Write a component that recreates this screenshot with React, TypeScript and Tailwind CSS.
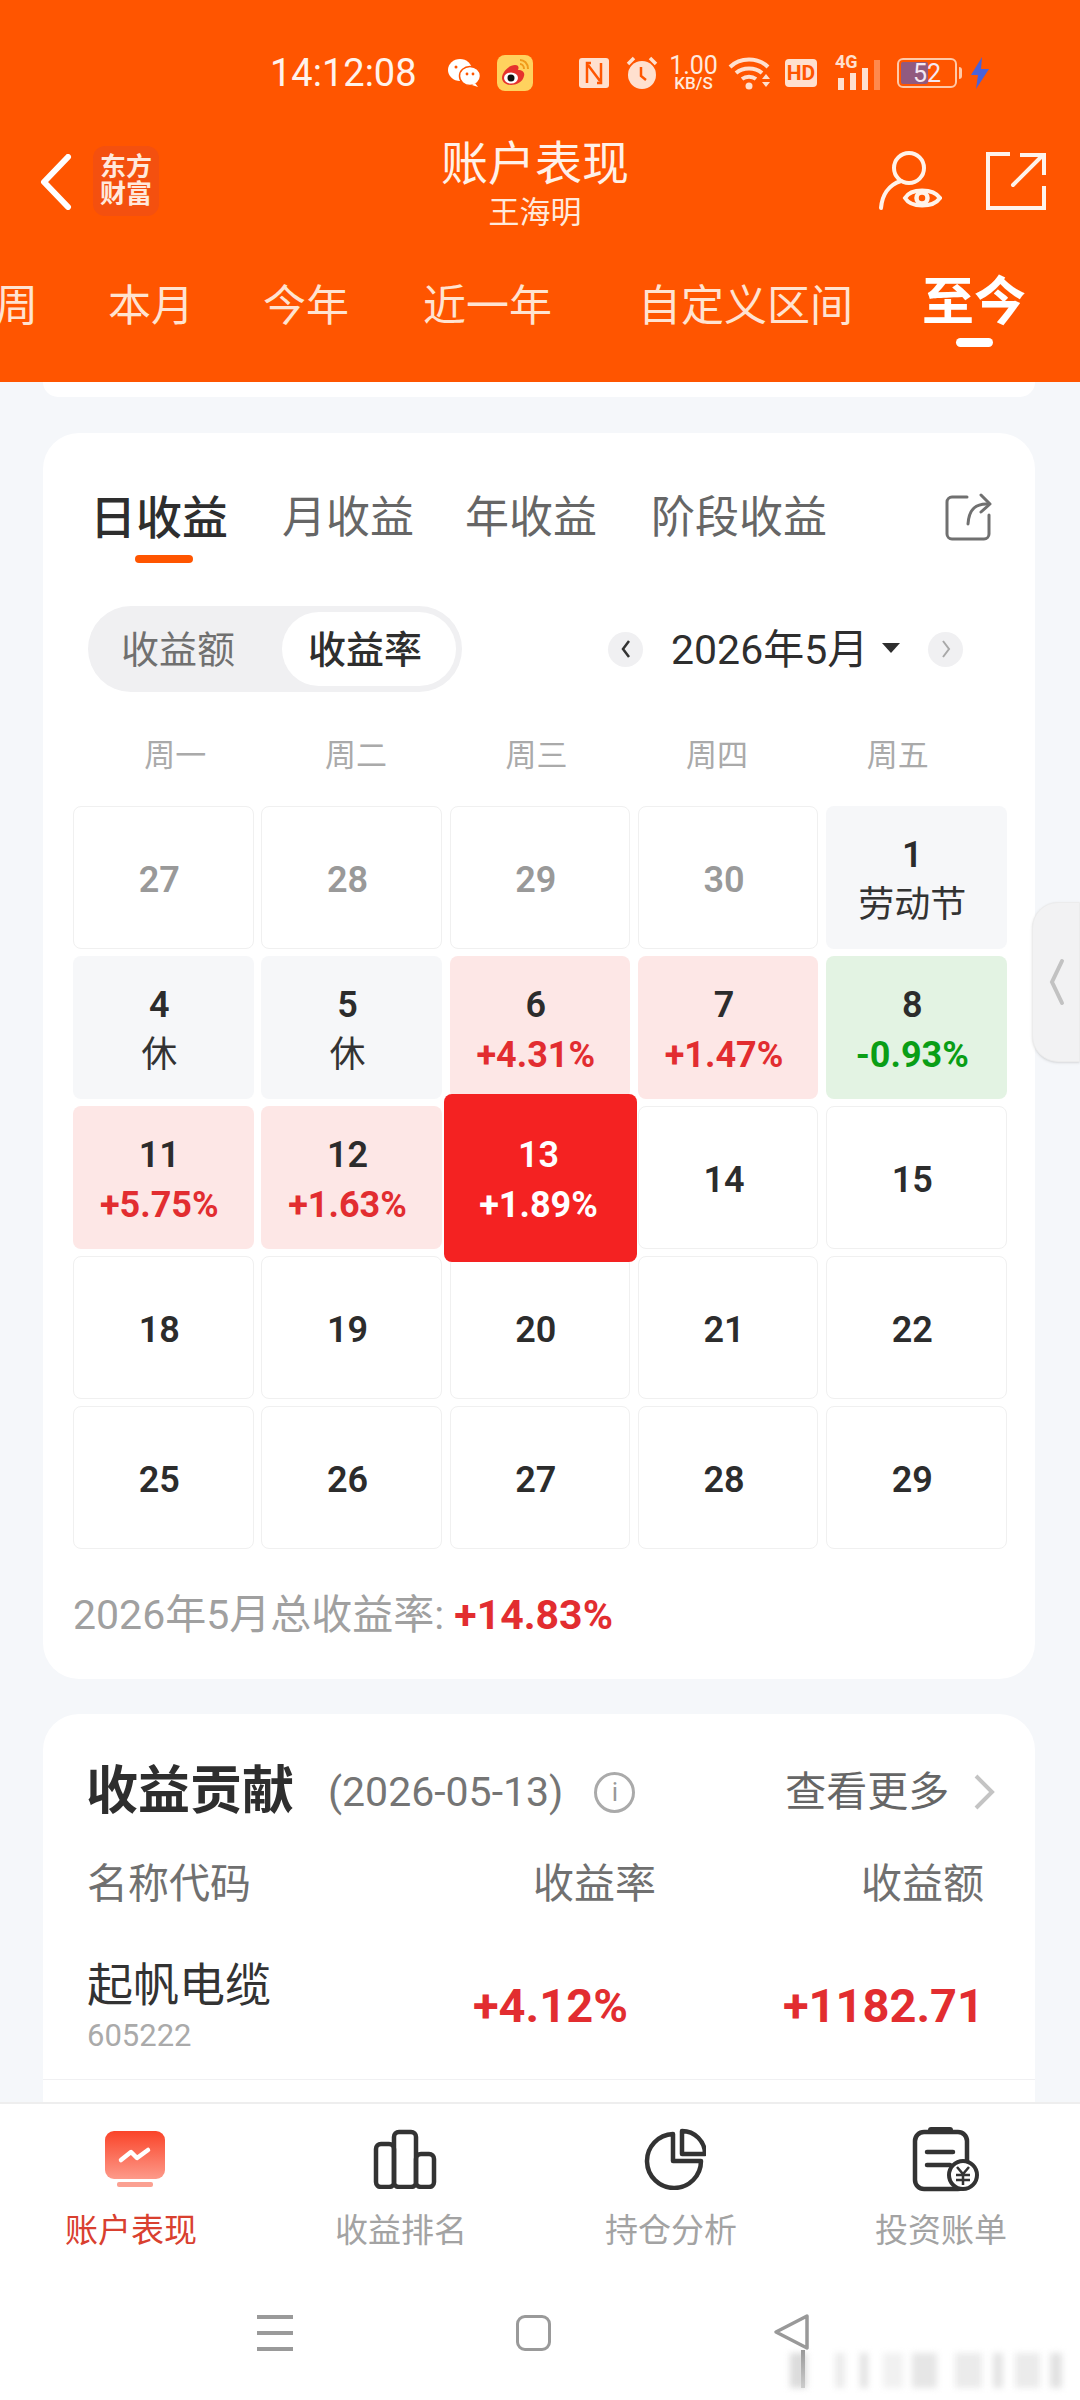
const font = { fontFamily: '"Roboto", "Noto Sans CJK SC", sans-serif' };

const StatusBar = () => (
  <div className="flex h-[132px] items-center pl-[270px] pt-[14px]">
    <span className="w-[177px] text-[38px] leading-none text-[#fff3ec]">14:12:08</span>
    <svg width="34" height="30" viewBox="0 0 34 30" className="mr-[16px]">
      <ellipse cx="13" cy="12" rx="12" ry="11" fill="#fff" />
      <ellipse cx="23" cy="18" rx="10.5" ry="9.5" fill="#fff" stroke="#ff5500" strokeWidth="1.5" />
      <path d="M28 25l3 4-6-2z" fill="#fff" />
      <circle cx="9" cy="9" r="1.5" fill="#ff5500" />
      <circle cx="20" cy="16" r="1.4" fill="#ff5500" />
      <circle cx="26" cy="16" r="1.4" fill="#ff5500" />
    </svg>
    <svg width="36" height="36" viewBox="0 0 36 36" className="mr-[46px]">
      <rect width="36" height="36" rx="8" fill="#ffd25e" />
      <path d="M5 23c0-6 7-13 13-13 4 0 4 3 3 5 5 0 7 3 6 6-1 6-8 9-13 9-5 0-9-3-9-7z" fill="#e6322d" />
      <ellipse cx="14" cy="23" rx="7" ry="5.5" fill="#fff" />
      <circle cx="14" cy="23" r="3.5" fill="#111" />
      <path d="M23 5c4 0 8 3 8 9M23 9c2 0 4 2 4 5" fill="none" stroke="#f09a1a" strokeWidth="2" />
    </svg>
    <svg width="30" height="30" viewBox="0 0 30 30" className="mr-[17px]">
      <rect width="30" height="30" rx="3" fill="#ffe0cf" />
      <path d="M12 5H8v20M18 25h4V5M9 7l12 16" fill="none" stroke="#ff5500" strokeWidth="2.5" />
    </svg>
    <svg width="32" height="34" viewBox="0 0 32 34" className="mr-[12px]">
      <circle cx="16" cy="19" r="14" fill="#ffe0cf" />
      <path d="M15 11v9l5 4" fill="none" stroke="#ff5500" strokeWidth="2.5" />
      <path d="M2 8l6-6M30 8l-6-6" stroke="#ffe0cf" strokeWidth="3.5" />
    </svg>
    <div className="mr-[11px] flex w-[47px] flex-col items-center text-[#ffe9dd]">
      <span className="text-[25px] leading-[20px]">1.00</span>
      <span className="text-[17px] leading-[15px] font-medium">KB/S</span>
    </div>
    <svg width="45" height="34" viewBox="0 0 45 34" className="mr-[12px]">
      <path d="M2 11c10-10 28-10 38 0M8 17c7-6 19-6 26 0M14 23c4-3 10-3 14 0" fill="none" stroke="#ffe0cf" strokeWidth="4" />
      <circle cx="21" cy="30" r="3.5" fill="#ffe0cf" />
      <path d="M34 23l4-5 4 5zM34 26l4 5 4-5z" fill="#ffe0cf" />
    </svg>
    <div className="mr-[18px] flex h-[28px] w-[32px] items-center justify-center rounded-[4px] bg-[#ffe0cf] text-[21px] leading-none font-bold text-[#ff5500]">
      HD
    </div>
    <div className="relative mr-[17px] h-[34px] w-[45px]">
      <span className="absolute -top-[3px] left-0 text-[18px] leading-none font-bold text-[#ffe0cf]">4G</span>
      <div className="absolute bottom-0 left-[3px] flex items-end gap-[6px]">
        <div className="h-[12px] w-[6px] bg-[#ffe0cf]" />
        <div className="h-[17px] w-[6px] bg-[#ffe0cf]" />
        <div className="h-[22px] w-[6px] bg-[#ffe0cf]" />
        <div className="h-[30px] w-[6px] bg-[#ff8a4d]" />
      </div>
    </div>
    <div className="relative mr-[13px] flex h-[30px] w-[60px] items-center rounded-[6px] border-2 border-[#ffc9a8] p-[2px]">
      <div className="h-full w-[52%] rounded-[2px] bg-[#915a7f]" />
      <span className="absolute inset-0 flex items-center justify-center text-[25px] leading-none text-[#f4e8f2]">52</span>
      <div className="absolute top-[7px] -right-[7px] h-[12px] w-[3px] rounded-r bg-[#ffc9a8]" />
    </div>
    <svg width="20" height="32" viewBox="0 0 20 32">
      <path d="M12 0L1 18h7l-2 14L19 12h-8z" fill="#4a62d8" />
    </svg>
  </div>
);

const NavBar = () => (
  <div className="relative flex h-[106px] items-start">
    <svg width="34" height="56" viewBox="0 0 34 56" className="mt-[22px] ml-[39px]">
      <path d="M29 3L5 28l24 25" fill="none" stroke="#fff" strokeWidth="6" strokeLinecap="round" strokeLinejoin="round" />
    </svg>
    <div className="mt-[14px] ml-[20px] flex h-[70px] w-[66px] flex-col items-center justify-center rounded-[12px] bg-[#f4500f] text-[26px] leading-[27px] font-bold text-[#ffe9dc]">
      <span>东方</span>
      <span>财富</span>
    </div>
    <div className="absolute top-0 left-0 flex w-full flex-col items-center pr-[10px]">
      <span className="mt-[5px] text-[47px] leading-[54px] text-[#fff1e8]">账户表现</span>
      <span className="text-[31px] leading-[44px] text-[#ffe9dc]">王海明</span>
    </div>
    <svg width="64" height="64" viewBox="0 0 64 64" className="mt-[18px] ml-[719px]" fill="none" stroke="#fff3ea" strokeWidth="4" strokeLinecap="round">
      <circle cx="31" cy="18" r="15" />
      <path d="M23 31C10 35 4 46 3 58" />
      <path d="M27 48c6-10 28-10 35 0-7 10-29 10-35 0z" strokeWidth="4" />
      <circle cx="44" cy="48" r="5.5" strokeWidth="4.5" />
    </svg>
    <svg width="60" height="60" viewBox="0 0 60 60" className="mt-[20px] ml-[44px]" fill="none" stroke="#fff3ea" strokeWidth="4">
      <path d="M24 2H2v54h56V34" />
      <path d="M34 3h24v20" />
      <path d="M57 3L27 33" strokeLinecap="round" />
    </svg>
  </div>
);

const PeriodTabs = () => (
  <div className="flex h-[144px] items-start overflow-hidden text-[43px] leading-[56px] text-[#ffe3d1]">
    <div className="mt-[40px] -ml-[5px] flex">
      <span className="w-[43px]">周</span>
      <span className="ml-[70px]">本月</span>
      <span className="ml-[69px]">今年</span>
      <span className="ml-[74px]">近一年</span>
      <span className="ml-[86px]">自定义区间</span>
    </div>
    <div className="mt-[31px] ml-[69px] flex flex-col items-center">
      <span className="text-[52px] leading-[68px] font-semibold text-white">至今</span>
      <div className="mt-[1px] h-[9px] w-[37px] rounded-full bg-white" />
    </div>
  </div>
);

type Cell = {
  day: number;
  sub?: string;
  kind?: "muted" | "plain" | "off" | "up" | "down" | "today";
};

const cells: Cell[] = [
  { day: 27, kind: "muted" },
  { day: 28, kind: "muted" },
  { day: 29, kind: "muted" },
  { day: 30, kind: "muted" },
  { day: 1, sub: "劳动节", kind: "off" },
  { day: 4, sub: "休", kind: "off" },
  { day: 5, sub: "休", kind: "off" },
  { day: 6, sub: "+4.31%", kind: "up" },
  { day: 7, sub: "+1.47%", kind: "up" },
  { day: 8, sub: "-0.93%", kind: "down" },
  { day: 11, sub: "+5.75%", kind: "up" },
  { day: 12, sub: "+1.63%", kind: "up" },
  { day: 13, sub: "+1.89%", kind: "today" },
  { day: 14 },
  { day: 15 },
  { day: 18 },
  { day: 19 },
  { day: 20 },
  { day: 21 },
  { day: 22 },
  { day: 25 },
  { day: 26 },
  { day: 27 },
  { day: 28 },
  { day: 29 },
];

const cellStyle = {
  muted: "border border-[#f0f0f0] bg-white",
  plain: "border border-[#f0f0f0] bg-white",
  off: "bg-[#f6f7f9]",
  up: "bg-[#fde7e6]",
  down: "bg-[#e3f3e3]",
  today: "",
};

const subStyle = {
  muted: "",
  plain: "",
  off: "text-[36px] font-normal text-[#333333]",
  up: "text-[36px] font-bold text-[#e22d30]",
  down: "text-[36px] font-bold text-[#0a9e16]",
  today: "",
};

const DayCell = ({ day, sub, kind = "plain" }: Cell) => {
  if (kind === "today") {
    return (
      <div className="relative">
        <div className="absolute -top-[12px] -left-[6px] z-10 flex h-[168px] w-[193px] flex-col items-center justify-center rounded-[8px] bg-[#f42222] pt-[3px] pr-[3px] text-white">
          <span className="text-[36px] leading-[50px] font-semibold">{day}</span>
          <span className="text-[36px] leading-[50px] font-bold">{sub}</span>
        </div>
      </div>
    );
  }
  return (
    <div className={`flex flex-col items-center justify-center rounded-[8px] pt-[5px] pr-[8px] ${cellStyle[kind]}`}>
      <span className={`text-[36px] leading-[50px] font-semibold ${kind === "muted" ? "text-[#999999]" : "text-[#2c2c2c]"}`}>
        {day}
      </span>
      {sub && <span className={`leading-[50px] ${subStyle[kind]}`}>{sub}</span>}
    </div>
  );
};

const CalendarCard = () => (
  <div className="mx-[43px] mt-[36px] h-[1246px] w-[992px] shrink-0 rounded-[36px] bg-white">
    <div className="relative flex h-[130px] items-start pt-[53px] pl-[47px] text-[44px] leading-[64px] text-[#666666]">
      <span className="text-[46px] font-medium text-[#2e2e2e]">日收益</span>
      <span className="ml-[54px]">月收益</span>
      <span className="ml-[51px]">年收益</span>
      <span className="ml-[54px]">阶段收益</span>
      <div className="absolute top-[122px] left-[92px] h-[8px] w-[58px] rounded-full bg-[#ff5500]" />
      <svg width="48" height="48" viewBox="0 0 48 48" className="absolute top-[60px] left-[902px]" fill="none" stroke="#707070" strokeWidth="3" strokeLinecap="round" strokeLinejoin="round">
        <path d="M22 4H7a5 5 0 0 0-5 5v32a5 5 0 0 0 5 5h32a5 5 0 0 0 5-5V22" />
        <path d="M36 2l9 9-9 8" />
        <path d="M44 11c-13-1-20 5-21 20" />
      </svg>
    </div>
    <div className="mt-[43px] flex h-[86px] items-center pl-[45px]">
      <div className="flex h-[86px] w-[374px] items-center rounded-full bg-[#f0f0f2] pl-[33px] text-[38px]">
        <span className="pt-[2px] text-[#707070]">收益额</span>
        <div className="ml-[47px] flex h-[74px] w-[174px] items-center justify-center rounded-full bg-white pt-[2px] pr-[8px] font-medium text-[#2e2e2e]">
          收益率
        </div>
      </div>
      <div className="ml-[146px] flex h-[35px] w-[35px] items-center justify-center rounded-full bg-[#f0f0f2]">
        <svg width="10" height="20" viewBox="0 0 10 20" fill="none" stroke="#333" strokeWidth="2.5"><path d="M8 2L2 10l6 8" /></svg>
      </div>
      <span className="ml-[28px] pt-[2px] text-[41px] leading-none text-[#2e2e2e]">2026年5月</span>
      <div className="mt-[-2px] ml-[14px] h-0 w-0 border-x-[9px] border-t-[10px] border-x-transparent border-t-[#2e2e2e]" />
      <div className="ml-[28px] flex h-[35px] w-[35px] items-center justify-center rounded-full bg-[#f0f0f2]">
        <svg width="10" height="20" viewBox="0 0 10 20" fill="none" stroke="#a8a8a8" strokeWidth="2"><path d="M2 2l6 8-6 8" /></svg>
      </div>
    </div>
    <div className="mt-[42px] ml-[42px] grid w-[903px] grid-cols-5 text-center text-[31px] leading-[44px] text-[#aaaaaa]">
      <span>周一</span>
      <span>周二</span>
      <span>周三</span>
      <span>周四</span>
      <span>周五</span>
    </div>
    <div className="mt-[28px] ml-[30px] grid w-[933.5px] grid-cols-5 grid-rows-[repeat(5,143px)] gap-x-[7.75px] gap-y-[7px]">
      {cells.map((cell, i) => (
        <DayCell key={i} {...cell} />
      ))}
    </div>
    <div className="mt-[42px] ml-[30px] text-[41px] leading-[48px] text-[#a0a0a0]">
      2026年5月总收益率: <span className="font-bold text-[#e22d30]">+14.83%</span>
    </div>
  </div>
);

const ContributionCard = () => (
  <div className="mx-[43px] mt-[35px] w-[992px] shrink-0 rounded-t-[36px] bg-white">
    <div className="flex h-[150px] items-center pt-[6px] pl-[43px]">
      <span className="text-[52px] leading-none font-bold text-[#2e2e2e]">收益贡献</span>
      <span className="ml-[34px] text-[41px] leading-none text-[#757575]">(2026-05-13)</span>
      <div className="ml-[31px] flex h-[41px] w-[41px] items-center justify-center rounded-full border-[3px] border-[#aaaaaa] text-[26px] leading-none text-[#999999]">
        i
      </div>
      <span className="ml-[150px] text-[41px] leading-none text-[#666666]">查看更多</span>
      <svg width="22" height="36" viewBox="0 0 22 36" className="ml-[24px]" fill="none" stroke="#c4c4c4" strokeWidth="4">
        <path d="M3 2l16 16L3 34" />
      </svg>
    </div>
    <div className="flex h-[40px] items-center pl-[44px] text-[41px] leading-none text-[#707070]">
      <span className="w-[446px]">名称代码</span>
      <span className="w-[123px] text-right">收益率</span>
      <span className="w-[328px] text-right">收益额</span>
    </div>
    <div className="flex h-[176px] border-b border-[#f0f0f2] pl-[44px]">
      <div className="flex w-[386px] flex-col pt-[51px]">
        <span className="text-[46px] leading-[60px] text-[#333333]">起帆电缆</span>
        <span className="mt-[3px] text-[31px] leading-[36px] text-[#aaaaaa]">605222</span>
      </div>
      <span className="w-[154px] pt-[72px] text-right text-[47px] leading-[60px] font-bold text-[#e22d30]">+4.12%</span>
      <span className="w-[357px] pt-[72px] text-right text-[47px] leading-[60px] font-bold text-[#e22d30]">+1182.71</span>
    </div>
    <div className="h-[40px]" />
  </div>
);

const tabs = [
  {
    label: "账户表现",
    icon: (
      <svg width="62" height="60" viewBox="0 0 62 60">
        <defs>
          <linearGradient id="tab-grad" x1="0" y1="0" x2="0" y2="1">
            <stop offset="0" stopColor="#fa4429" />
            <stop offset="1" stopColor="#fd9a8a" />
          </linearGradient>
        </defs>
        <rect x="1" y="2" width="60" height="48" rx="9" fill="url(#tab-grad)" />
        <rect x="13" y="53" width="36" height="5" rx="2" fill="#fba192" />
        <path d="M17 31l10-8 6 6 11-8" fill="none" stroke="#fff" strokeWidth="4.5" strokeLinecap="round" strokeLinejoin="round" />
      </svg>
    ),
  },
  {
    label: "收益排名",
    icon: (
      <svg width="64" height="60" viewBox="0 0 64 60" fill="none" stroke="#333" strokeWidth="4.5" strokeLinejoin="round">
        <rect x="3" y="15" width="18" height="43" rx="5" />
        <rect x="21" y="3" width="22" height="55" rx="5" />
        <rect x="43" y="25" width="18" height="33" rx="5" />
      </svg>
    ),
  },
  {
    label: "持仓分析",
    icon: (
      <svg width="62" height="62" viewBox="0 0 62 62" fill="none" stroke="#333" strokeWidth="4.5" strokeLinejoin="round">
        <path d="M29 6A27 27 0 1 0 57 33H29Z" />
        <path d="M38 3A23 23 0 0 1 61 26H38Z" />
      </svg>
    ),
  },
  {
    label: "投资账单",
    icon: (
      <svg width="68" height="66" viewBox="0 0 68 66">
        <rect x="4" y="6" width="52" height="57" rx="9" fill="none" stroke="#333" strokeWidth="4.5" />
        <rect x="17" y="1" width="25" height="6" rx="3" fill="#333" />
        <path d="M16 26h26M16 39h23" stroke="#333" strokeWidth="4.5" strokeLinecap="round" />
        <circle cx="52" cy="49" r="14" fill="#fff" stroke="#333" strokeWidth="4" />
        <path d="M46 41l6 7 6-7M45 49h14M45 54h14M52 48v11" fill="none" stroke="#333" strokeWidth="2.5" />
      </svg>
    ),
  },
];

const TabBar = () => (
  <div className="grid h-[172px] shrink-0 grid-cols-4 border-t-2 border-[#eeeeee] bg-white">
    {tabs.map((t, i) => (
      <div key={t.label} className="flex flex-col items-center pt-[22px]">
        <div className="flex h-[66px] items-center justify-center">{t.icon}</div>
        <span className={`mt-[16px] pr-[8px] text-[33px] leading-[46px] ${i === 0 ? "text-[#d9402f]" : "text-[#a3a3a3]"}`}>
          {t.label}
        </span>
      </div>
    ))}
  </div>
);

const SystemNav = () => (
  <div className="relative flex flex-1 items-start bg-white pt-[41px] pl-[257px]">
    <div className="flex h-[36px] w-[36px] flex-col justify-between">
      <div className="h-[4px] bg-[#9a9a9a]" />
      <div className="h-[4px] bg-[#9a9a9a]" />
      <div className="h-[4px] bg-[#9a9a9a]" />
    </div>
    <div className="ml-[223px] h-[36px] w-[35px] rounded-[9px] border-[3px] border-[#9a9a9a]" />
    <svg width="36" height="38" viewBox="0 0 36 38" className="mt-[-2px] ml-[222px]" fill="none" stroke="#999999" strokeWidth="3.5" strokeLinejoin="round">
      <path d="M34 3L3 19l31 16z" />
    </svg>
    <div className="absolute bottom-[12px] left-[790px] flex h-[35px] items-stretch blur-[3px]">
      <div className="w-[17px] bg-[#dcdcdc]" />
      <div className="ml-[28px] w-[10px] bg-[#ececec]" />
      <div className="ml-[15px] w-[8px] bg-[#e2e2e2]" />
      <div className="ml-[15px] w-[20px] bg-[#f1f1f1]" />
      <div className="ml-[9px] w-[25px] bg-[#e6e6e6]" />
      <div className="ml-[18px] w-[27px] bg-[#ebebeb]" />
      <div className="ml-[11px] w-[10px] bg-[#e4e4e4]" />
      <div className="ml-[12px] w-[25px] bg-[#ebebeb]" />
      <div className="ml-[10px] w-[12px] bg-[#e2e2e2]" />
    </div>
    <div className="absolute bottom-[12px] left-[801px] h-[38px] w-[4px] bg-gradient-to-b from-[#999999] to-[#cccccc]" />
  </div>
);

export default function App() {
  return (
    <div style={font} className="relative flex h-[2400px] w-[1080px] flex-col overflow-hidden bg-[#f5f7fa]">
      <div className="shrink-0 bg-[#ff5500]">
        <StatusBar />
        <NavBar />
        <PeriodTabs />
      </div>
      <div className="flex h-[1720px] shrink-0 flex-col overflow-hidden">
        <div className="mx-[43px] h-[15px] w-[992px] shrink-0 rounded-b-[36px] bg-white" />
        <CalendarCard />
        <ContributionCard />
      </div>
      <TabBar />
      <SystemNav />
      <div className="absolute top-[902px] right-0 flex h-[160px] w-[48px] items-center rounded-l-[26px] border border-[#ececec] bg-[#f2f2f3] pl-[16px] shadow-sm">
        <svg width="16" height="48" viewBox="0 0 16 48" fill="none" stroke="#c2c2c2" strokeWidth="4" strokeLinecap="round">
          <path d="M13 3L3 24l10 21" />
        </svg>
      </div>
    </div>
  );
}
